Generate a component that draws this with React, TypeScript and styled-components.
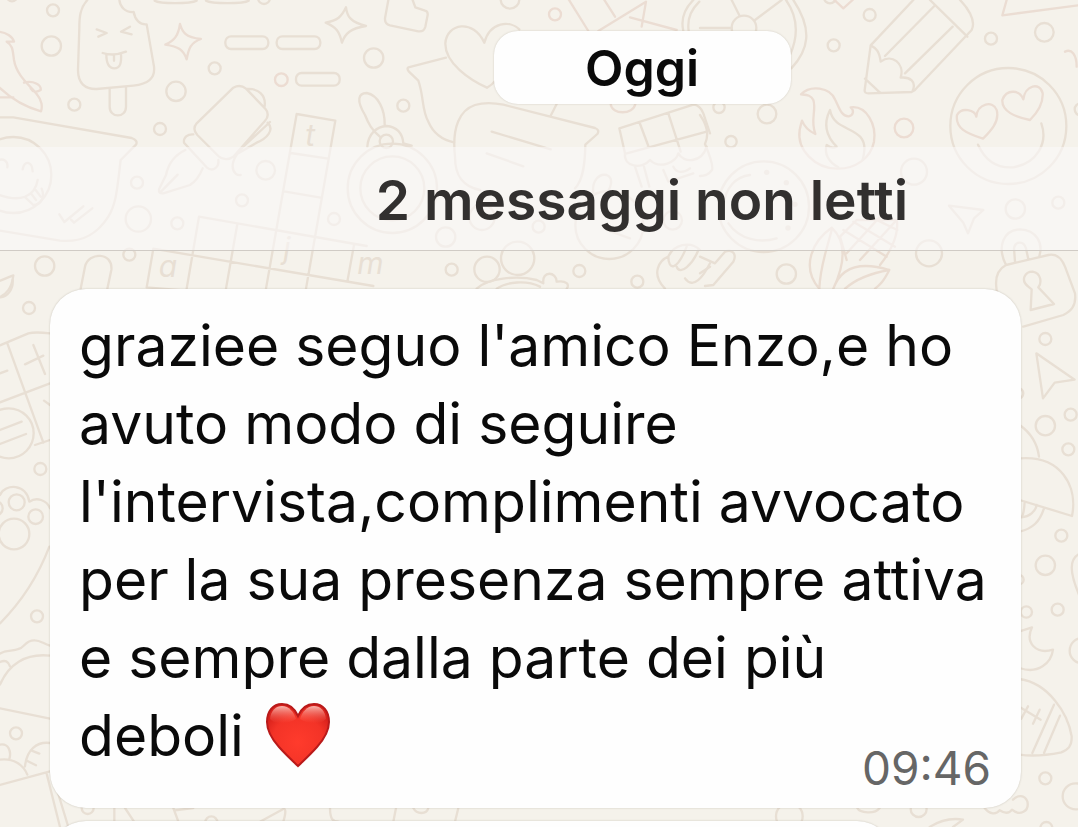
import React from "react";
import styled, { createGlobalStyle } from "styled-components";

const GlobalStyle = createGlobalStyle`
  * { box-sizing: border-box; }
  body { margin: 0; background: #f5f2eb; }
`;

const Chat = styled.main`
  position: relative;
  height: 100vh;
  overflow: hidden;
  display: flex;
  flex-direction: column;
  padding-top: 31px;
  background: #f5f2eb;
  color: #0a0a0a;
  font-family: Inter, "Liberation Sans", sans-serif;
`;

const Wallpaper = styled.svg`
  position: absolute;
  inset: 0;
  width: 100%;
  height: 100%;
`;

const DayRow = styled.div`
  position: relative;
  flex: none;
  display: flex;
  justify-content: center;
  padding-left: 206px;
`;

const DayPill = styled.time`
  width: 297px;
  height: 73px;
  border-radius: 24px;
  background: #fefefe;
  box-shadow: 0 0 2px rgba(90, 80, 60, 0.25);
  font-size: 50px;
  font-weight: 600;
  line-height: 75px;
  text-align: center;
`;

const UnreadBanner = styled.div`
  position: relative;
  flex: none;
  margin-top: 43px;
  height: 104px;
  padding-left: 206px;
  border-bottom: 1px solid #d0cbc5;
  background: rgba(250, 249, 248, 0.6);
  color: #32302f;
  font-size: 55px;
  font-weight: 600;
  line-height: 106px;
  text-align: center;
  white-space: nowrap;
`;

const Messages = styled.section`
  position: relative;
  flex: none;
  display: flex;
  flex-direction: column;
  gap: 13px;
  margin-top: 38px;
  padding: 0 57px 0 50px;
`;

const Bubble = styled.article<{ $short?: boolean }>`
  display: flex;
  flex-direction: column;
  padding: 18px 30px 14px 29px;
  border-radius: 36px;
  background: #fefefe;
  box-shadow: 0 0 2px rgba(90, 80, 60, 0.3);
  height: ${(p) => (p.$short ? "80px" : "auto")};
  margin-right: ${(p) => (p.$short ? "128px" : "0")};
`;

const BubbleText = styled.p`
  margin: 0;
  font-size: 57px;
  line-height: 78px;
  white-space: nowrap;
`;

const SentAt = styled.time`
  align-self: flex-end;
  margin-top: -33px;
  color: #666;
  font-size: 46px;
  line-height: 52px;
`;

const HeartIcon = styled.svg`
  width: 66px;
  height: 66px;
  margin-left: 5px;
  vertical-align: -12px;
`;

const Heart = () => (
  <HeartIcon viewBox="0 0 66 66" role="img" aria-label="cuore rosso">
    <defs>
      <radialGradient id="heartFill" cx="0.5" cy="0.62" r="0.6">
        <stop offset="0" stopColor="#ff3b2c" />
        <stop offset="0.7" stopColor="#f33327" />
        <stop offset="1" stopColor="#d9221c" />
      </radialGradient>
      <linearGradient id="heartShine" x1="0" y1="0" x2="0" y2="1">
        <stop offset="0" stopColor="#ffd0c8" stopOpacity="0.85" />
        <stop offset="1" stopColor="#ff6a58" stopOpacity="0" />
      </linearGradient>
    </defs>
    <path
      d="M33 64C30 61 22 54 14 45C6 36 2 29 2 20C2 9 8 2 17 2C25 2 30 7 33 14C36 7 41 2 49 2C58 2 64 9 64 20C64 29 60 36 52 45C44 54 36 61 33 64Z"
      fill="url(#heartFill)"
      stroke="#b91a1a"
      strokeWidth="2"
    />
    <path d="M5 17C6 8 11 4 17 4C24 4 29 10 31 17C24 22 10 23 5 17Z" fill="url(#heartShine)" />
    <path d="M35 17C37 10 42 4 49 4C55 4 60 8 61 17C56 23 42 22 35 17Z" fill="url(#heartShine)" />
  </HeartIcon>
);

const Dots = ({ at }: { at: number[][] }) => (
  <>
    {at.map(([x, y, r]) => (
      <circle key={`${x}-${y}-${r}`} cx={x} cy={y} r={r} />
    ))}
  </>
);

const Doodles = () => (
  <Wallpaper viewBox="0 0 1078 827" preserveAspectRatio="xMinYMin slice" aria-hidden="true">
    <g fill="none" stroke="#e8dfd4" strokeWidth="7" strokeLinecap="round" strokeLinejoin="round">
      {/* top left: ice lolly, sparkles, pen, crossword */}
      <g transform="scale(0.33333)">
        <Dots
          at={[
            [159, 31, 18], [154, 138, 29], [223, 314, 18], [528, 274, 29], [644, 205, 18],
            [480, 387, 18], [411, 548, 18], [415, 657, 38], [532, 670, 18], [726, 601, 18],
            [797, 511, 28], [1002, 657, 18], [134, 798, 29], [388, 764, 18], [792, -6, 18], [36, -12, 16],
          ]}
        />
        <circle cx="844" cy="239" r="19" stroke="#ecdcd2" />
        <path d="M262 0C240 25 238 50 238 85L234 210C234 250 255 268 290 267L400 257C445 252 466 235 462 200L440 73C420 75 405 60 401 36C375 38 360 20 358 0" />
        <path d="M290 88L320 99L295 110M390 80L363 95L395 103M308 159C330 166 355 164 378 155M319 163C319 190 325 205 343 205C360 205 365 190 363 161M342 163V182" />
        <path d="M329 265V320C329 355 378 355 378 320V262" />
        <path d="M540 72C547 96 555 112 603 117C572 128 566 145 560 178C550 148 535 140 496 134C525 122 535 105 540 72Z" stroke="#ebddd3" />
        <path d="M1038 22C1041 48 1050 66 1098 78C1052 85 1035 100 1026 128C1018 95 1010 82 977 68C1012 62 1025 50 1038 22Z" />
        <rect x="676" y="109" width="129" height="38" rx="17" />
        <rect x="830" y="109" width="131" height="38" rx="17" />
        <rect x="888" y="219" width="131" height="38" rx="17" />
        <path d="M464 2C480 12 570 12 590 2M618 2C635 12 730 12 746 2" />
        <path d="M-10 95C20 95 38 112 42 125L20 125C38 135 38 150 42 180C50 230 95 260 112 285C125 300 128 320 123 334C70 320 25 290 -10 255M72 248C100 240 125 255 122 270C110 278 98 276 92 265M-10 292H40" stroke="#ebddd3" />
        <path d="M-10 352H40L395 414Q415 422 408 434L362 480C352 560 350 610 325 650C290 705 245 728 180 722L-10 690" />
        <circle cx="40" cy="525" r="114" />
        <path d="M-10 485C10 470 25 485 22 502M68 508C72 480 96 482 98 514M-10 582C60 610 105 590 113 540M76 592L100 615C125 615 135 590 125 566M93 580L108 600M107 570L122 590" />
        <path d="M178 643L193 666L250 619M213 659L222 668L277 625" />
        <path d="M590 370L700 263C715 255 728 258 738 266L795 325C808 340 805 352 794 364L700 470C688 480 668 480 655 468L592 405C580 392 580 382 590 370ZM740 267C775 265 798 285 794 318M803 368C825 390 800 415 770 428L715 460M810 366L730 440C705 465 685 500 708 522Q714 526 722 525" />
        <path d="M580 403C562 402 550 412 552 428L620 502C640 518 658 500 655 480M556 450C525 465 505 490 498 525L477 568Q475 582 490 580L570 555C590 542 600 525 608 505M480 578L533 524" />
        <path d="M890 342L1006 362L918 866M890 342L798 866M872 459L985 476M852 574L962 593M597 650L1100 738M597 650L560 866M712 672L678 866M460 746L1120 858M460 746L440 862L560 872M1062 735L1042 845" />
        <path d="M242 866L255 800C265 755 340 755 334 810L322 866M-10 845C10 840 28 830 40 826C35 865 20 885 -10 895" />
        <g fill="#e8dfd4" stroke="none" fontFamily="Inter, sans-serif" fontSize="90" fontStyle="italic" fontWeight="400">
          <text x="916" y="438">t</text>
          <text x="850" y="778">j</text>
          <text x="476" y="832">a</text>
          <text x="1072" y="822">m</text>
        </g>
      </g>

      {/* top centre: hearts, whistle, speech bubbles */}
      <g transform="translate(340 0) scale(0.33333)">
        <Dots
          at={[
            [101, 174, 29], [190, 317, 18], [510, -2, 28], [317, 711, 29], [426, 652, 38],
            [335, 809, 18], [441, 808, 38], [533, 775, 50], [718, 813, 18], [892, 845, 18],
            [596, 680, 18], [998, 661, 28], [139, 424, 20], [157, 565, 134], [157, 565, 96],
          ]}
        />
        <circle cx="645" cy="43" r="18" stroke="#ecdcd2" />
        <path d="M145 0L135 55Q134 72 150 76L235 94Q252 96 256 80L263 45Q264 34 255 32L226 22L218 0" />
        <path d="M441 263C390 240 315 190 316 130C320 70 400 55 433 128C450 65 510 60 538 88M441 263C455 255 460 250 466 242M318 173L205 202Q200 206 206 214L235 242C252 290 245 330 265 365C280 400 310 420 342 427" />
        <path d="M345 470C335 380 360 330 405 315C435 306 460 308 490 314L765 384Q780 390 772 402L736 434C735 490 730 540 705 565M345 470C345 530 370 560 420 570M650 312L632 347M455 395L632 448M440 460L550 499" />
        <path d="M122 412C95 390 85 370 75 345C48 300 55 280 80 279C115 285 135 330 134 374M82 440C85 400 110 380 140 378C170 380 188 400 190 430L215 437" />
        <path d="M812 312C815 345 880 345 886 312M684 -5L745 93M790 -5L825 50M775 93L918 5L905 80M870 52L1010 90" stroke="#ebddd3" />
        <path d="M838 385L1060 314Q1080 315 1090 340L1110 400M838 385L855 460M898 366L925 438M985 340L1022 455M855 462L1100 395M855 460C850 500 905 510 930 480C960 510 1010 485 1015 460C1030 490 1085 490 1100 440M885 500L905 560M912 500L928 560M970 510L985 545L1060 520M1000 500C1010 520 1030 520 1050 505" />
        <circle cx="808" cy="675" r="102" />
        <path d="M760 580C755 545 775 520 800 525C825 535 810 570 795 585M800 690L870 715M410 866C440 835 530 825 590 840L610 850C605 810 650 815 650 845C680 840 690 855 680 866M470 866C500 845 560 840 600 860" />
        <path d="M975 866C930 820 960 780 985 770C1000 735 1050 720 1080 750M985 770C985 810 1010 815 1040 740M1010 800C1020 830 1060 790 1075 750M1035 835C1060 870 1090 830 1110 790" />
        <path d="M1030 93C1020 50 1040 20 1060 0M1046 93C1040 50 1058 25 1078 5" />
      </g>

      {/* top right: wheel, pencil, flame, emoji, corn, padlock */}
      <g transform="translate(700 0) scale(0.33333)">
        <Dots
          at={[
            [509, 45, 18], [401, 136, 18], [873, 116, 18], [1033, 97, 28], [201, 342, 28],
            [57, 322, 17], [93, 425, 17], [642, 515, 39], [946, 627, 29], [1075, 608, 18],
            [687, 760, 39], [259, 822, 29], [132, 84, 37], [191, 620, 136], [1142, 328, 18], [390, -8, 18],
          ]}
        />
        <circle cx="612" cy="384" r="28" stroke="#ecdcd2" />
        <path d="M0 84H95M95 0L118 46M245 0L165 60M258 0C300 60 290 120 270 165M280 0C340 90 325 150 274 205" />
        <path d="M403 0L430 25L458 0" stroke="#ecdcd2" />
        <path d="M640 0L512 136L494 270Q493 280 505 280L635 276Q645 273 650 264L815 90C830 60 800 20 780 0M690 0L802 110M703 18L555 168M758 80L615 220M512 136C530 145 538 155 542 185C575 160 615 190 602 233C630 230 650 245 638 272M495 236L540 278" />
        <path d="M920 0L907 46L1134 16M1095 155C1115 145 1130 165 1130 200" stroke="#ebddd3" />
        <path d="M303 283C330 255 390 260 406 300C418 325 425 350 446 349C462 345 462 330 452 322C500 315 530 375 522 425C512 475 465 508 410 506C345 504 290 450 299 390Q302 375 306 362C315 385 330 395 346 402C330 360 350 330 340 300C333 285 320 285 303 283Z" stroke="#ebddd3" />
        <path d="M415 502C385 485 372 460 380 435C390 443 400 445 410 440C370 400 375 360 390 330C400 385 455 380 482 412C500 435 492 460 488 480" />
        <circle cx="925" cy="378" r="174" />
        <path d="M849 416C800 400 765 385 771 345C785 320 825 330 829 350C832 310 880 300 890 330C900 365 870 395 849 416ZM990 360C945 350 905 335 907 300C920 265 960 270 970 298C975 255 1020 245 1028 280C1030 315 1010 340 990 360Z" stroke="#ebddd3" />
        <path d="M834 434C860 490 900 505 940 502C1010 490 1045 430 1024 370" />
        <path d="M747 617L850 630L822 655L804 700L790 668Z" />
        <path d="M70 620C75 560 110 530 150 525M85 670C120 720 180 730 230 715M0 345C25 380 25 410 15 432C35 480 40 500 36 510C25 525 10 528 0 528" />
        <g fill="#e8dfd4" stroke="none">
          <circle cx="200" cy="517" r="8" />
          <circle cx="259" cy="548" r="8" />
          <circle cx="285" cy="613" r="8" />
          <circle cx="264" cy="684" r="8" />
        </g>
        <path d="M358 866C300 800 340 720 395 683C435 720 440 780 400 866M395 690C380 750 360 800 358 866M400 866C420 810 470 780 568 810C550 845 540 855 525 866M435 866C470 835 510 820 568 810M420 710L470 660L590 660C600 710 560 770 540 795M430 690L560 770M460 665L585 740M510 650L592 690M440 760L540 650M480 780L585 665M420 710L440 780" stroke="#eaddd2" />
        <path d="M0 770L45 790L75 755C100 745 110 765 100 785L40 855L15 858M0 820L30 800" />
        <path d="M918 795C890 740 910 690 960 688C1010 690 1030 730 1018 768M945 785L942 745C945 725 970 720 978 745L985 778M918 795C890 810 885 840 890 870C895 890 905 895 918 900M918 795L1045 765C1070 760 1085 775 1095 800L1125 880C1130 920 1110 935 1090 945L970 980M985 860C960 840 975 815 998 815C1025 820 1025 850 1015 862L1062 912L992 930L995 868Z" />
      </g>

      {/* left edge: calculator, paw, cap */}
      <g transform="translate(0 280) scale(0.33333)">
        <Dots at={[[87, 84, 18], [121, 567, 18], [50, 667, 24], [107, 710, 22], [42, 762, 46], [26, 460, 75], [-14, 685, 22]]} />
        <path d="M0 196L85 160Q105 155 150 160M22 190L130 488M0 367L150 310M75 253L130 227M100 195L135 282M0 280L22 272M132 362L150 375M105 495L150 480M0 450L65 425M0 492L78 462M0 52C25 50 40 25 38 0" />
        <path d="M0 645C15 610 80 610 88 665C110 650 140 660 150 685M148 800C110 900 60 970 0 1030" />
      </g>
      <g transform="translate(0 553) scale(0.33333)">
        <Dots at={[[111, 190, 18], [48, 541, 18], [263, 765, 18], [634, 808, 18]]} />
        <path d="M0 302C15 290 40 295 55 288C75 285 75 260 105 262C120 262 130 272 150 278M0 395C25 335 75 300 150 308M0 327C15 320 25 325 30 340M0 466L150 497M0 575C25 570 35 595 28 618M0 620C40 615 70 635 82 665M75 640C80 590 110 565 150 570M95 593L118 602M78 622L108 637M0 696L150 655M140 662L180 822M165 690L205 822" />
        <path d="M343 760V806M375 765L402 806M520 765L535 806M525 772L580 765M780 806L850 768Q862 765 850 806M990 765C990 800 1000 806 1015 806M1188 765L1180 806M1240 765C1250 785 1280 785 1285 765M1375 765L1365 806" />
      </g>

      {/* right edge: pointer, mushroom, moon, ball */}
      <g transform="translate(778 280) scale(0.33333)">
        <Dots at={[[802, 177, 18], [802, 437, 29], [878, 404, 18], [871, 508, 18], [850, 767, 18], [720, 340, 16]]} />
        <path d="M775 220L890 299L830 308L795 355Z" />
        <path d="M725 435C760 460 778 490 783 530M725 535C850 525 900 620 882 708L725 660M740 665C738 690 738 705 730 712C755 710 772 695 776 675M725 755C765 745 785 725 798 685" />
      </g>
      <g transform="translate(778 553) scale(0.33333)">
        <Dots at={[[802, 37, 29], [745, 177, 17], [839, 170, 18], [913, 293, 38], [802, 676, 18], [893, 730, 39], [34, 790, 40], [422, 768, 24], [805, 825, 18], [723, 80, 14]]} />
        <path d="M725 235L762 223C740 270 775 305 825 290C820 330 780 365 725 345M910 0C870 15 875 60 905 130" />
        <path d="M725 378C810 390 870 480 881 550C882 580 870 590 850 598C800 608 760 610 725 605M828 455L763 600M846 488L798 600M725 462L788 500M730 497L750 460M765 512L785 470" />
        <path d="M238 765C245 780 290 785 305 765M620 765C635 785 655 785 665 772C685 785 695 780 702 770C725 790 755 775 748 745C740 725 720 725 705 740M455 822C490 800 525 795 555 800L525 822" />
      </g>
    </g>
  </Wallpaper>
);

export default function App() {
  return (
    <>
      <GlobalStyle />
      <Chat>
        <Doodles />
        <DayRow>
          <DayPill>Oggi</DayPill>
        </DayRow>
        <UnreadBanner role="status">2 messaggi non letti</UnreadBanner>
        <Messages aria-label="Messaggi">
          <Bubble>
            <BubbleText>
              graziee seguo l'amico Enzo,e ho
              <br />
              avuto modo di seguire
              <br />
              l'intervista,complimenti avvocato
              <br />
              per la sua presenza sempre attiva
              <br />
              e sempre dalla parte dei più
              <br />
              deboli <Heart />
            </BubbleText>
            <SentAt dateTime="09:46">09:46</SentAt>
          </Bubble>
          <Bubble $short />
        </Messages>
      </Chat>
    </>
  );
}
